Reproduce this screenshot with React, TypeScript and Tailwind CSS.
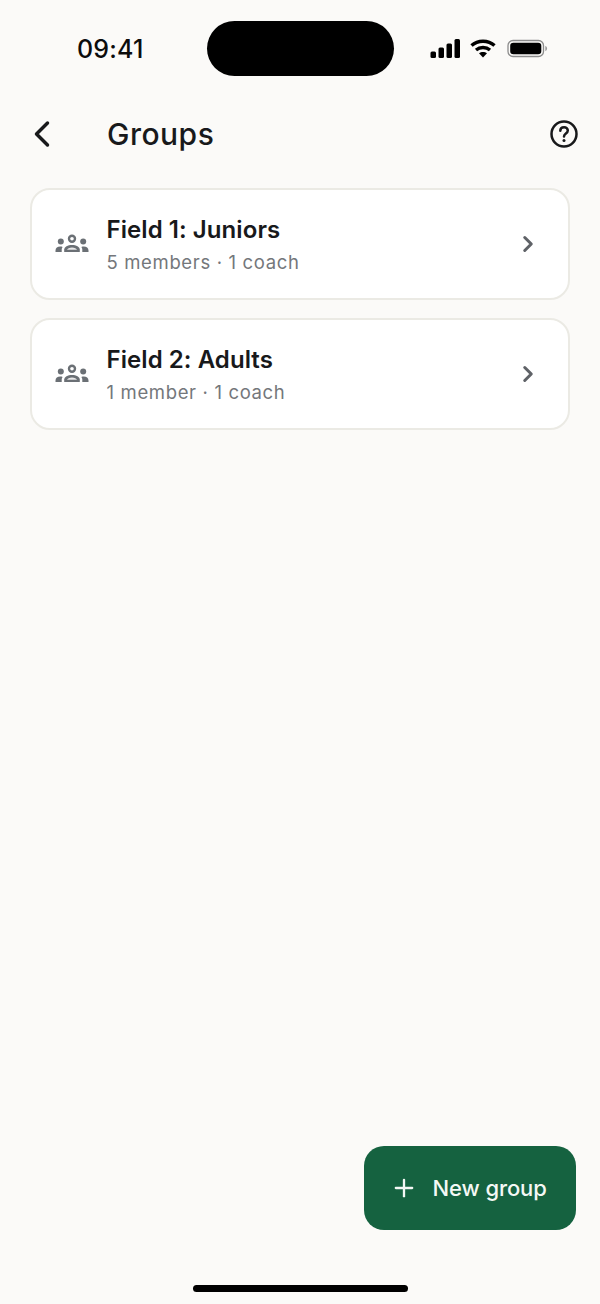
import { ChevronLeft, ChevronRight, Plus } from 'lucide-react';

function GroupsIcon() {
  return (
    <svg width="34" height="20" viewBox="0 0 34 20" fill="#6b7075" className="shrink-0">
      <circle cx="17" cy="4.800" r="3" fill="none" stroke="#6b7075" strokeWidth="2.400" />
      <circle cx="5.800" cy="7.400" r="3" />
      <circle cx="28.200" cy="7.400" r="3" />
      <path d="M9.200 18v-2.400c0-2.900 3.600-4.700 7.800-4.700s7.800 1.800 7.800 4.700V18Z" />
      <path d="M12 15.800c.5-1.200 2.400-2.300 5-2.300s4.500 1.100 5 2.300Z" fill="#e9e9ea" />
      <path d="M.5 18v-1.500c0-2.400 2-4 4.700-4 .9 0 1.700.1 2.400.4-.6.800-.9 1.700-.9 2.700V18Z" />
      <path d="M33.500 18v-1.500c0-2.400-2-4-4.700-4-.9 0-1.700.1-2.400.4.6.800.9 1.700.9 2.700V18Z" />
    </svg>
  );
}

function GroupCard({ name, meta }: { name: string; meta: string }) {
  return (
    <div className="h-[112px] rounded-[20px] border-2 border-[#ebeae4] bg-white flex items-center pl-[23px] pr-[27px]">
      <GroupsIcon />
      <div className="ml-[17.500px] flex-1 pt-[1px]">
        <div className="text-[24px] leading-[30px] font-semibold text-[#18191b] tracking-[0.07px]">{name}</div>
        <div className="mt-[4px] text-[18.500px] leading-[26px] text-[#74777b] tracking-[0.65px]">{meta}</div>
      </div>
      <ChevronRight size={26} strokeWidth={2.800} color="#5f6267" />
    </div>
  );
}

export default function App() {
  return (
    <div className="w-[600px] h-[1304px] bg-[#fbfaf8] flex flex-col font-['Inter',sans-serif]">
      <div className="h-[96px] flex items-start relative">
        <div className="absolute left-[77px] top-[33px] text-[25px] leading-[32px] font-medium text-[#0c0c0c] tracking-[0.2px]">09:41</div>
        <div className="absolute left-[207px] top-[21px] w-[187px] h-[55px] rounded-full bg-black" />
        <div className="absolute left-[430px] top-[39px] flex items-center gap-[10px]">
          <svg width="30" height="19" viewBox="0 0 30 19" fill="#000">
            <rect x="0.500" y="12.500" width="5.500" height="6.500" rx="1.500" />
            <rect x="8.500" y="8.500" width="5.500" height="10.500" rx="1.500" />
            <rect x="16.500" y="4.500" width="5.500" height="14.500" rx="1.500" />
            <rect x="24.500" y="0" width="5.500" height="19" rx="1.500" />
          </svg>
          <svg width="26" height="19" viewBox="0 0 26 19" fill="none" stroke="#000" strokeWidth="3.400">
            <path d="M1.500 6.500C7.800.8 18.200.8 24.500 6.500" />
            <path d="M6 11c3.900-3.300 10.100-3.300 14 0" />
            <path d="M13 18.500 9 14.300c2.300-1.800 5.700-1.800 8 0Z" fill="#000" stroke="none" />
          </svg>
          <svg width="41" height="19" viewBox="0 0 41 19" className="ml-[1px]">
            <rect x="1" y="1.500" width="35.500" height="16" rx="5" fill="none" stroke="#8c8c8c" strokeWidth="1.300" />
            <rect x="3.200" y="3.700" width="31.100" height="11.600" rx="3.200" fill="#000" />
            <path d="M38.300 7v5c1.100-.3 1.800-1.300 1.800-2.500S39.400 7.300 38.300 7Z" fill="#9a9a9a" />
          </svg>
        </div>
      </div>

      <div className="h-[76px] flex items-center relative pb-[1px]">
        <ChevronLeft size={44} strokeWidth={1.900} color="#18191b" className="absolute left-[20px] top-[16px]" />
        <div className="ml-[107px] text-[30px] leading-[38px] font-medium text-[#18191b] tracking-[0.5px]">Groups</div>
        <svg width="30" height="30" viewBox="0 0 30 30" fill="none" stroke="#18191b" strokeWidth="2.500" className="absolute left-[549px] top-[23px]">
          <circle cx="15" cy="15" r="12.500" />
          <path d="M11.300 11.800c0-2.200 1.700-3.600 3.800-3.600s3.700 1.400 3.700 3.300c0 2.900-3.800 3-3.800 5.900" strokeLinecap="round" />
          <circle cx="15" cy="21.600" r="1.500" fill="#18191b" stroke="none" />
        </svg>
      </div>

      <div className="px-[30px] pt-[16px] flex flex-col gap-[18px]">
        <GroupCard name="Field 1: Juniors" meta="5 members · 1 coach" />
        <GroupCard name="Field 2: Adults" meta="1 member · 1 coach" />
      </div>

      <div className="mt-auto flex justify-end pr-[24px]">
        <button className="w-[212.500px] h-[84px] rounded-[20px] bg-[#156240] text-[#f4f8f5] flex items-center pl-[26px] gap-[15px]">
          <Plus size={28} strokeWidth={2} />
          <span className="text-[22px] font-medium tracking-[-0.1px]">New group</span>
        </button>
      </div>

      <div className="h-[74px] flex items-end justify-center pb-[12px]">
        <div className="w-[215px] h-[7px] rounded-full bg-black" />
      </div>
    </div>
  );
}
